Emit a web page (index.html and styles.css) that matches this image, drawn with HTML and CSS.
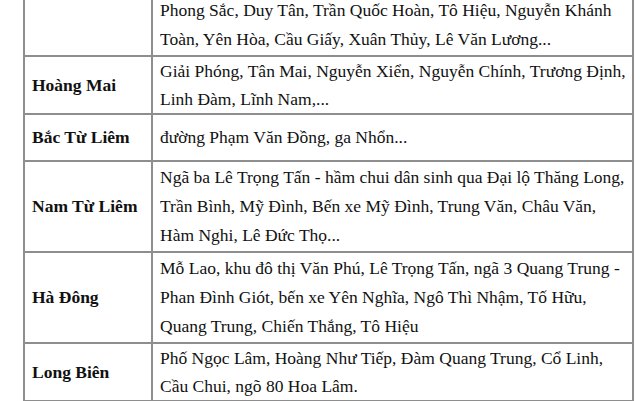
FILE: index.html
```html
<!DOCTYPE html>
<html lang="vi">
<head>
<meta charset="utf-8">
<link rel="stylesheet" href="styles.css">
</head>
<body>
<table class="grid">
  <tr class="r-top">
    <td class="district"></td>
    <td class="streets">Phong Sắc, Duy Tân, Trần Quốc Hoàn, Tô Hiệu, Nguyễn Khánh<br>Toàn, Yên Hòa, Cầu Giấy, Xuân Thủy, Lê Văn Lương...</td>
  </tr>
  <tr class="r2">
    <td class="district">Hoàng Mai</td>
    <td class="streets">Giải Phóng, Tân Mai, Nguyễn Xiển, Nguyễn Chính, Trương Định,<br>Linh Đàm, Lĩnh Nam,...</td>
  </tr>
  <tr class="r1">
    <td class="district">Bắc Từ Liêm</td>
    <td class="streets">đường Phạm Văn Đồng, ga Nhổn...</td>
  </tr>
  <tr class="r3">
    <td class="district">Nam Từ Liêm</td>
    <td class="streets">Ngã ba Lê Trọng Tấn - hầm chui dân sinh qua Đại lộ Thăng Long,<br>Trần Bình, Mỹ Đình, Bến xe Mỹ Đình, Trung Văn, Châu Văn,<br>Hàm Nghi, Lê Đức Thọ...</td>
  </tr>
  <tr class="r3">
    <td class="district">Hà Đông</td>
    <td class="streets">Mỗ Lao, khu đô thị Văn Phú, Lê Trọng Tấn, ngã 3 Quang Trung -<br>Phan Đình Giót, bến xe Yên Nghĩa, Ngô Thì Nhậm, Tố Hữu,<br>Quang Trung, Chiến Thắng, Tô Hiệu</td>
  </tr>
  <tr class="r2">
    <td class="district">Long Biên</td>
    <td class="streets">Phố Ngọc Lâm, Hoàng Như Tiếp, Đàm Quang Trung, Cổ Linh,<br>Cầu Chui, ngõ 80 Hoa Lâm.</td>
  </tr>
</table>
</body>
</html>
```
FILE: styles.css
```css
html, body {
  margin: 0;
  padding: 0;
  background: #ffffff;
}
body {
  font-family: "Liberation Serif", "Times New Roman", serif;
  font-size: 17.5px;
  color: #111111;
  overflow: hidden;
}
.grid {
  border-collapse: collapse;
  margin-left: 23px;
  margin-top: -6px;
  width: 611px;
  table-layout: fixed;
}
.grid td {
  border: 2px solid #8e8e8e;
  padding: 0 7px;
  line-height: 29px;
  white-space: nowrap;
  vertical-align: middle;
}
.grid .district {
  width: 112px;
  font-weight: bold;
}
.r-top td { height: 61px; line-height: 28.5px; border-top: none; }
.r2 td { height: 55px; line-height: 28px; }
.r1 td { height: 45px; }
.r3 td { height: 89px; }
```
